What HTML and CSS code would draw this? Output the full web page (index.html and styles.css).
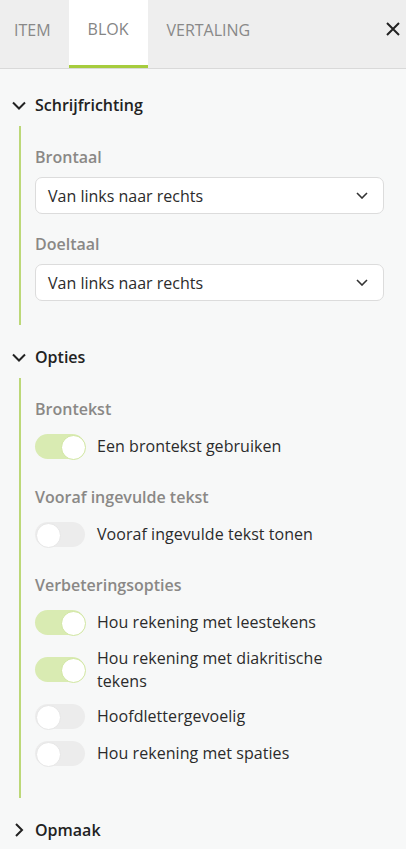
FILE: index.html
```html
<!DOCTYPE html>
<html lang="nl">
<head>
<meta charset="utf-8">
<title>Blok</title>
<link rel="stylesheet" href="styles.css">
</head>
<body>
<div class="panel">
  <div class="tabbar">
    <div class="tab first">ITEM</div>
    <div class="tab active">BLOK</div>
    <div class="tab">VERTALING</div>
    <div class="spacer"></div>
    <button class="close" aria-label="Sluiten">
      <svg width="14" height="14" viewBox="0 0 14 14"><path d="M1 1L13 13M13 1L1 13" stroke="#222" stroke-width="2" fill="none" stroke-linecap="butt"/></svg>
    </button>
  </div>

  <div class="content">
    <section class="section">
      <div class="sec-head">
        <svg class="chev-down" width="14" height="9" viewBox="0 0 14 9"><path d="M1 1.5L7 7.5L13 1.5" stroke="#222" stroke-width="2" fill="none"/></svg>
        <span>Schrijfrichting</span>
      </div>
      <div class="sec-body">
        <div class="label">Brontaal</div>
        <div class="select">
          <span>Van links naar rechts</span>
          <svg width="12" height="7" viewBox="0 0 12 7"><path d="M1 1L6 6L11 1" stroke="#333" stroke-width="1.6" fill="none"/></svg>
        </div>
        <div class="label gap-top">Doeltaal</div>
        <div class="select">
          <span>Van links naar rechts</span>
          <svg width="12" height="7" viewBox="0 0 12 7"><path d="M1 1L6 6L11 1" stroke="#333" stroke-width="1.6" fill="none"/></svg>
        </div>
      </div>
    </section>

    <section class="section">
      <div class="sec-head">
        <svg class="chev-down" width="14" height="9" viewBox="0 0 14 9"><path d="M1 1.5L7 7.5L13 1.5" stroke="#222" stroke-width="2" fill="none"/></svg>
        <span>Opties</span>
      </div>
      <div class="sec-body opts">
        <div class="label">Brontekst</div>
        <div class="toggles">
          <div class="row"><span class="switch on"></span><span class="rtext">Een brontekst gebruiken</span></div>
        </div>
        <div class="label group">Vooraf ingevulde tekst</div>
        <div class="toggles">
          <div class="row"><span class="switch"></span><span class="rtext">Vooraf ingevulde tekst tonen</span></div>
        </div>
        <div class="label group">Verbeteringsopties</div>
        <div class="toggles">
          <div class="row"><span class="switch on"></span><span class="rtext">Hou rekening met leestekens</span></div>
          <div class="row"><span class="switch on"></span><span class="rtext">Hou rekening met diakritische tekens</span></div>
          <div class="row"><span class="switch"></span><span class="rtext">Hoofdlettergevoelig</span></div>
          <div class="row"><span class="switch"></span><span class="rtext">Hou rekening met spaties</span></div>
        </div>
      </div>
    </section>

    <section class="section">
      <div class="sec-head">
        <svg class="chev-right" width="14" height="14" viewBox="0 0 14 14"><path d="M4 1L10 7L4 13" stroke="#222" stroke-width="2" fill="none"/></svg>
        <span>Opmaak</span>
      </div>
    </section>
  </div>
</div>
</body>
</html>
```

FILE: styles.css
```css
* { box-sizing: border-box; }
html, body { margin: 0; padding: 0; }
body {
  font-family: "Open Sans", "Noto Sans", sans-serif;
  font-size: 16px;
  color: #2b2b2b;
  background: #f7f8f8;
  width: 406px;
  height: 849px;
  overflow: hidden;
}
.tabbar {
  display: flex;
  height: 69px;
  background: #eeeeee;
  border-bottom: 1px solid #d9d9d9;
}
.tab {
  height: 68px;
  padding: 18px 19px 0;
  line-height: 24px;
  color: #888888;
  border-bottom: 3px solid transparent;
}
.tab.first { padding-left: 14px; padding-right: 18px; }
.tab.active {
  background: #ffffff;
  border-bottom-color: #a6cc3d;
  padding-top: 17px;
  color: #858585;
}
.spacer { flex: 1; }
.close {
  border: 0;
  background: none;
  padding: 0;
  margin: 22px 6px 0 0;
  width: 14px;
  height: 14px;
  display: block;
}
.close svg { display: block; }
.content { padding: 24px 22px 0 0; }
.section { margin-bottom: 20px; }
.sec-head {
  display: flex;
  align-items: center;
  height: 24px;
  font-weight: 600;
  color: #222;
  line-height: 24px;
}
.chev-down { margin: 0 9px 0 12px; }
.chev-right { margin: 0 9px 0 12px; }
.sec-body {
  margin: 9px 0 0 19px;
  border-left: 2px solid #bcd878;
  padding: 19px 0 24px 14px;
}
.sec-body.opts { padding-bottom: 32px; }
.label {
  font-weight: 600;
  color: #8a8886;
  line-height: 24px;
  margin-bottom: 8px;
}
.label.gap-top { margin-top: 18px; }
.label.group { margin-top: 26px; }
.select {
  display: flex;
  align-items: center;
  justify-content: space-between;
  height: 37px;
  background: #fff;
  border: 1px solid #dcdcdc;
  border-radius: 7px;
  padding: 0 15px 0 12px;
  line-height: 24px;
}
.select svg { display: block; }
.toggles {
  display: flex;
  flex-direction: column;
  gap: 12px;
  padding-top: 5px;
}
.row {
  display: flex;
  align-items: center;
  gap: 12px;
  min-height: 25px;
}
.rtext { line-height: 22.5px; max-width: 240px; letter-spacing: 0.05px; }
.switch {
  position: relative;
  flex: none;
  width: 50px;
  height: 25px;
  border-radius: 13px;
  background: #ececec;
}
.switch::after {
  content: "";
  position: absolute;
  top: 1px;
  left: 1px;
  width: 23px;
  height: 23px;
  border-radius: 50%;
  background: #fff;
  border: 1px solid #e6e6e6;
}
.switch.on { background: #d9ebb2; }
.switch.on::after { left: 26px; border-color: #d0e6a0; }
```
